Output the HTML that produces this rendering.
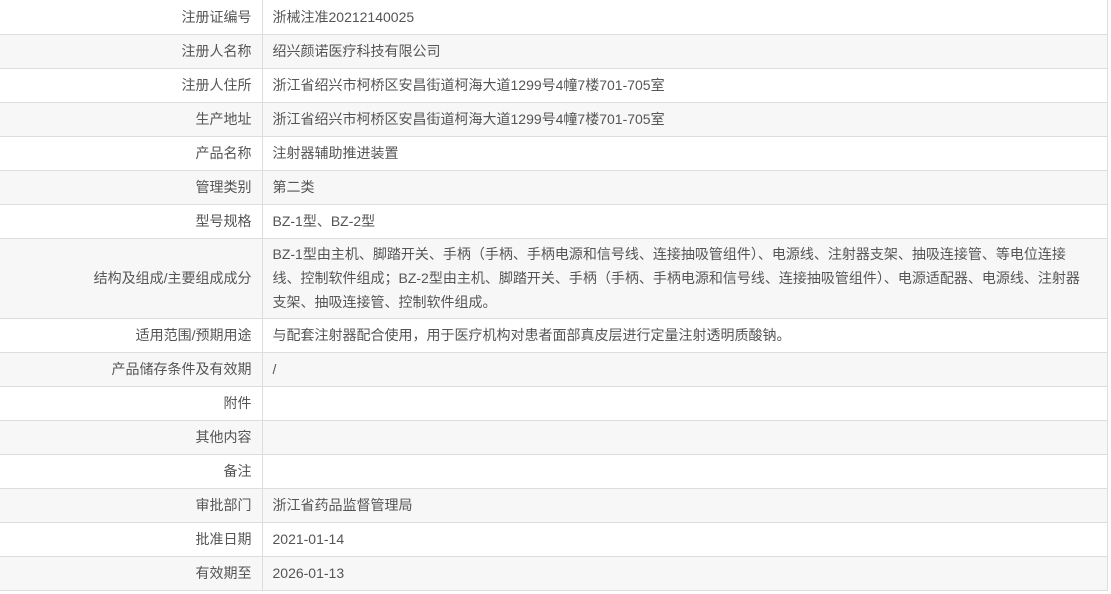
<!DOCTYPE html>
<html><head><meta charset="utf-8"><style>
body{margin:0;background:#fff;font-family:"Liberation Sans","Noto Sans CJK SC",sans-serif;font-size:14px;color:#555;}
table{border-collapse:collapse;width:1108px;table-layout:fixed;}
td{border:1px solid #ddd;height:34px;padding:0 10px;line-height:24px;vertical-align:middle;box-sizing:border-box;}
td.l{width:262px;text-align:right;}
tr:nth-child(even) td{background:#f7f7f7;}
tr:first-child td{border-top:none;}
td:first-child{border-left:none;}
</style></head><body>
<table>
<tr><td class="l">注册证编号</td><td>浙械注准20212140025</td></tr>
<tr><td class="l">注册人名称</td><td>绍兴颜诺医疗科技有限公司</td></tr>
<tr><td class="l">注册人住所</td><td>浙江省绍兴市柯桥区安昌街道柯海大道1299号4幢7楼701-705室</td></tr>
<tr><td class="l">生产地址</td><td>浙江省绍兴市柯桥区安昌街道柯海大道1299号4幢7楼701-705室</td></tr>
<tr><td class="l">产品名称</td><td>注射器辅助推进装置</td></tr>
<tr><td class="l">管理类别</td><td>第二类</td></tr>
<tr><td class="l">型号规格</td><td>BZ-1型、BZ-2型</td></tr>
<tr><td class="l" style="height:80px">结构及组成/主要组成成分</td><td style="height:80px;white-space:nowrap">BZ-1型由主机、脚踏开关、手柄（手柄、手柄电源和信号线、连接抽吸管组件）、电源线、注射器支架、抽吸连接管、等电位连接<br>线、控制软件组成；BZ-2型由主机、脚踏开关、手柄（手柄、手柄电源和信号线、连接抽吸管组件）、电源适配器、电源线、注射器<br>支架、抽吸连接管、控制软件组成。</td></tr>
<tr><td class="l">适用范围/预期用途</td><td>与配套注射器配合使用，用于医疗机构对患者面部真皮层进行定量注射透明质酸钠。</td></tr>
<tr><td class="l">产品储存条件及有效期</td><td>/</td></tr>
<tr><td class="l">附件</td><td></td></tr>
<tr><td class="l">其他内容</td><td></td></tr>
<tr><td class="l">备注</td><td></td></tr>
<tr><td class="l">审批部门</td><td>浙江省药品监督管理局</td></tr>
<tr><td class="l">批准日期</td><td>2021-01-14</td></tr>
<tr><td class="l">有效期至</td><td>2026-01-13</td></tr>
</table>
</body></html>
